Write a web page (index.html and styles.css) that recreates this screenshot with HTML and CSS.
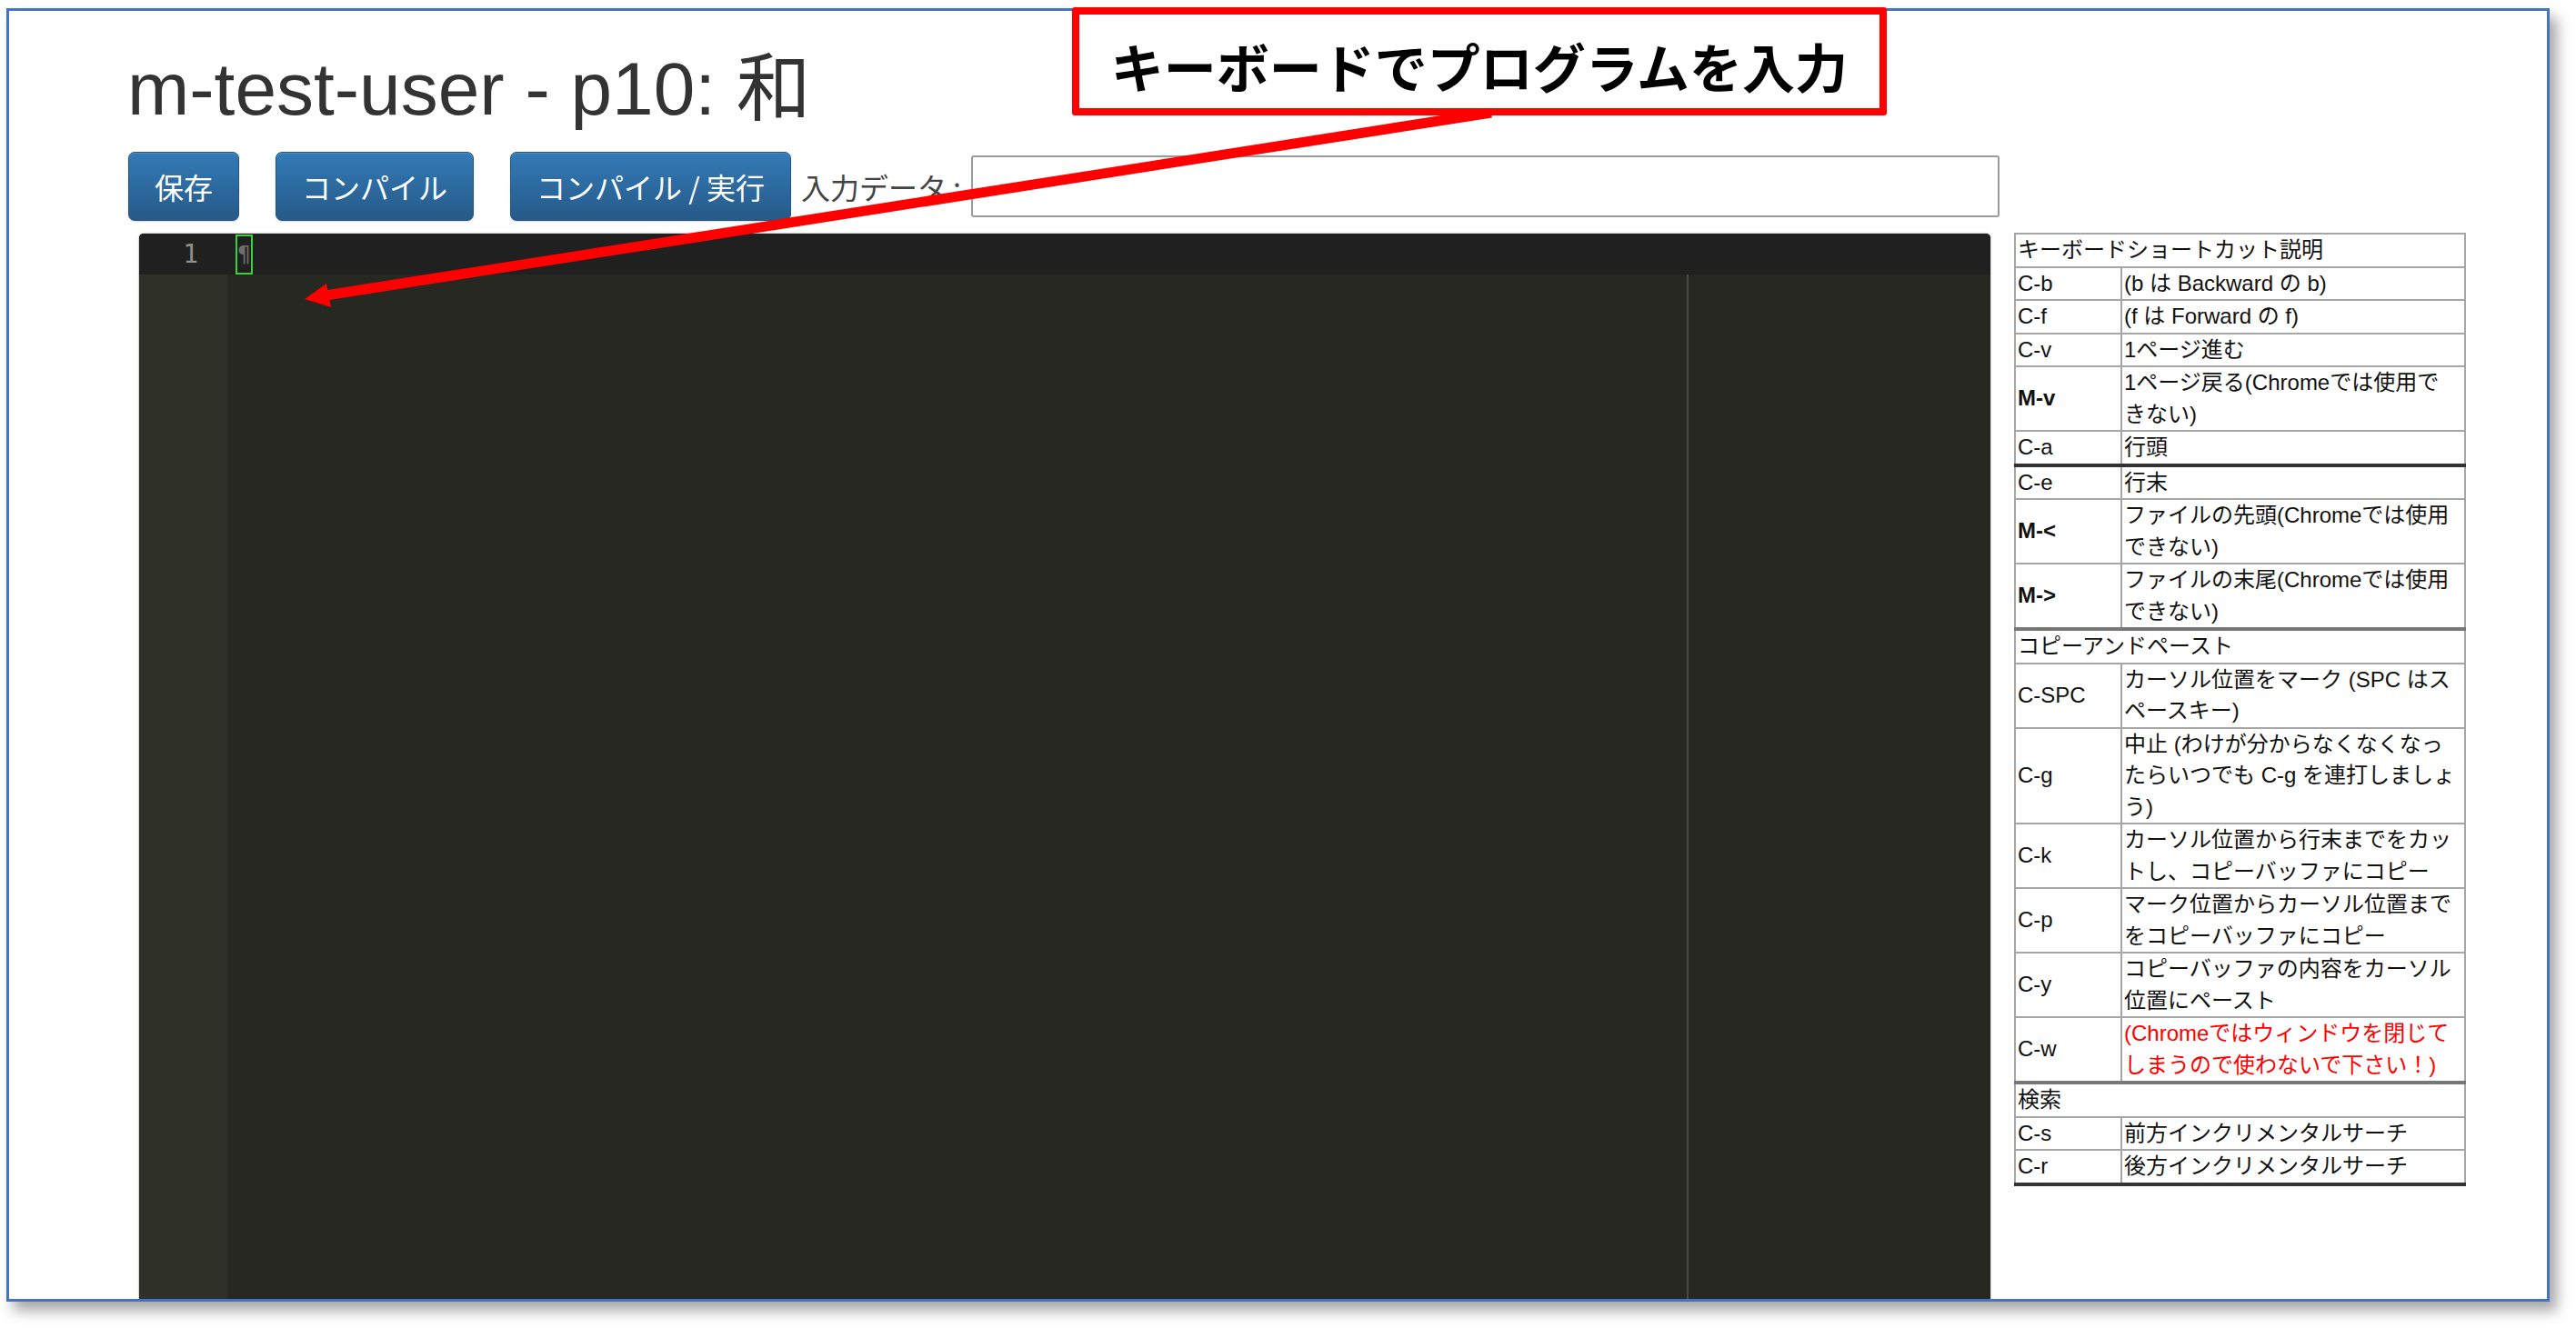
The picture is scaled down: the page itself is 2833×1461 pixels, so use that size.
FILE: index.html
```html
<!DOCTYPE html>
<html lang="ja">
<head>
<meta charset="utf-8">
<title>m-test-user - p10: 和</title>
<link rel="stylesheet" href="styles.css">
</head>
<body>
<div class="frame">
  <div class="container">
    <h1 class="title">m-test-user - p10: 和</h1>
    <div class="toolbar">
      <button class="btn btn-spaced">保存</button>
      <button class="btn btn-spaced">コンパイル</button>
      <button class="btn">コンパイル / 実行</button>
      <label class="input-label" for="input-data">入力データ :</label>
      <input class="input-data" id="input-data" type="text">
    </div>
    <div class="main">
      <div class="editor">
        <div class="active-line">
          <div class="gutter-cell">1</div>
          <div class="code-line"><span class="cursor">¶</span></div>
        </div>
        <div class="editor-body">
          <div class="gutter"></div>
          <div class="content"><div class="print-margin"></div></div>
        </div>
      </div>
      <table class="shortcuts">
        <colgroup><col class="col-key"><col class="col-desc"></colgroup>
        <tr><td colspan="2">キーボードショートカット説明</td></tr>
        <tr><td>C-b</td><td>(b は Backward の b)</td></tr>
        <tr><td>C-f</td><td>(f は Forward の f)</td></tr>
        <tr><td>C-v</td><td>1ページ進む</td></tr>
        <tr><td class="meta">M-v</td><td>1ページ戻る(Chromeでは使用で<br>きない)</td></tr>
        <tr class="sep-dark"><td>C-a</td><td>行頭</td></tr>
        <tr><td>C-e</td><td>行末</td></tr>
        <tr><td class="meta">M-&lt;</td><td>ファイルの先頭(Chromeでは使用<br>できない)</td></tr>
        <tr class="sep"><td class="meta">M-&gt;</td><td>ファイルの末尾(Chromeでは使用<br>できない)</td></tr>
        <tr><td colspan="2">コピーアンドペースト</td></tr>
        <tr><td>C-SPC</td><td>カーソル位置をマーク (SPC はス<br>ペースキー)</td></tr>
        <tr><td>C-g</td><td>中止 (わけが分からなくなくなっ<br>たらいつでも C-g を連打しましょ<br>う)</td></tr>
        <tr><td>C-k</td><td>カーソル位置から行末までをカッ<br>トし、コピーバッファにコピー</td></tr>
        <tr><td>C-p</td><td>マーク位置からカーソル位置まで<br>をコピーバッファにコピー</td></tr>
        <tr><td>C-y</td><td>コピーバッファの内容をカーソル<br>位置にペースト</td></tr>
        <tr class="sep"><td>C-w</td><td class="warn">(Chromeではウィンドウを閉じて<br>しまうので使わないで下さい！)</td></tr>
        <tr><td colspan="2">検索</td></tr>
        <tr><td>C-s</td><td>前方インクリメンタルサーチ</td></tr>
        <tr class="sep-dark"><td>C-r</td><td>後方インクリメンタルサーチ</td></tr>
      </table>
    </div>
  </div>
</div>
<svg class="arrow" width="2833" height="1461" viewBox="0 0 2833 1461">
  <line x1="1640" y1="124" x2="358" y2="325" stroke="#ff0000" stroke-width="11"/>
  <polygon points="335,329 359,312 364,338" fill="#ff0000"/>
</svg>
<div class="callout">キーボードでプログラムを入力</div>
</body>
</html>
```
FILE: styles.css
```css
* { box-sizing: border-box; }

html, body {
  margin: 0;
  background: #fff;
}

body {
  position: relative;
  width: 2833px;
  height: 1461px;
  overflow: hidden;
  padding: 9px 0 0 7px;
  font-family: "Liberation Sans", "Noto Sans CJK JP", sans-serif;
}

.frame {
  width: 2797px;
  height: 1423px;
  border: 3px solid #4472c4;
  background: #fff;
  overflow: hidden;
  box-shadow: 8px 10px 14px rgba(0, 0, 0, 0.35);
}

.container {
  padding-left: 130px;
}

.title {
  margin: 41px 0 0 0;
  font-family: "Liberation Sans", "Noto Sans CJK JP", sans-serif;
  font-size: 82px;
  line-height: 90px;
  font-weight: 400;
  color: #333;
}

.toolbar {
  display: flex;
  align-items: center;
  gap: 11px;
  height: 76px;
  margin-top: 24px;
  padding-left: 1px;
}

.btn {
  height: 76px;
  padding: 0 28px;
  border: 1px solid #245580;
  border-radius: 7px;
  background: linear-gradient(to bottom, #337ab7 0%, #265a88 100%);
  color: #fff;
  font-family: "Noto Sans CJK JP", sans-serif;
  font-size: 32px;
  line-height: 1;
  box-shadow: inset 0 1px 0 rgba(255, 255, 255, 0.15), 0 1px 2px rgba(0, 0, 0, 0.15);
}

.btn-spaced {
  margin-right: 29px;
}

.input-label {
  font-family: "Noto Sans CJK JP", sans-serif;
  font-size: 32px;
  color: #444;
}

.input-data {
  width: 1131px;
  height: 68px;
  border: 2px solid #9a9a9a;
  border-radius: 3px;
  background: #fff;
}

.main {
  display: flex;
  align-items: flex-start;
  margin-top: 14px;
}

.editor {
  display: flex;
  flex-direction: column;
  width: 2036px;
  height: 1190px;
  margin-left: 13px;
  background: #272822;
  border-radius: 5px 5px 0 0;
  overflow: hidden;
  box-shadow: 0 0 2px rgba(0, 0, 0, 0.6);
}

.active-line {
  display: flex;
  align-items: center;
  flex: none;
  height: 45px;
  background: #202020;
}

.gutter-cell {
  width: 97px;
  padding-right: 32px;
  text-align: right;
  color: #8f908a;
  font-family: "DejaVu Sans Mono", monospace;
  font-size: 28px;
}

.code-line {
  display: flex;
  align-items: flex-start;
  height: 100%;
  padding-left: 9px;
}

.cursor {
  display: block;
  width: 19px;
  height: 44px;
  margin-top: 1px;
  border: 2px solid #3ecf3e;
  color: #6d6d6d;
  font-family: "DejaVu Sans Mono", monospace;
  font-size: 24px;
  line-height: 40px;
  text-align: center;
  overflow: hidden;
}

.editor-body {
  display: flex;
  flex: 1;
}

.gutter {
  width: 97px;
  background: #2f3129;
}

.content {
  flex: 1;
}

.print-margin {
  width: 1607px;
  height: 100%;
  border-right: 2px solid #4a4a44;
}

.shortcuts {
  width: 497px;
  margin: -1px 0 0 26px;
  border-collapse: collapse;
  table-layout: fixed;
  font-family: "Liberation Sans", "Noto Sans CJK JP", sans-serif;
  font-size: 24px;
  line-height: 34.5px;
  color: #111;
}

.col-key {
  width: 117px;
}

.shortcuts td {
  padding: 0 2px;
  border: 2px solid #a6a6a6;
  vertical-align: middle;
  white-space: nowrap;
}

.shortcuts .meta {
  font-weight: 700;
}

.shortcuts .warn {
  color: #ff0000;
}

.shortcuts .sep td {
  border-bottom: 4px solid #777;
}

.shortcuts .sep-dark td {
  border-bottom: 4px solid #333;
}

.arrow {
  position: absolute;
  left: 0;
  top: 0;
}

.callout {
  position: absolute;
  left: 1179px;
  top: 8px;
  width: 896px;
  height: 119px;
  display: flex;
  align-items: center;
  justify-content: center;
  padding-top: 8px;
  border: 8px solid #ff0000;
  border-radius: 3px;
  background: #fff;
  font-family: "Noto Sans CJK JP", sans-serif;
  font-size: 58px;
  font-weight: 600;
  color: #000;
}
```
